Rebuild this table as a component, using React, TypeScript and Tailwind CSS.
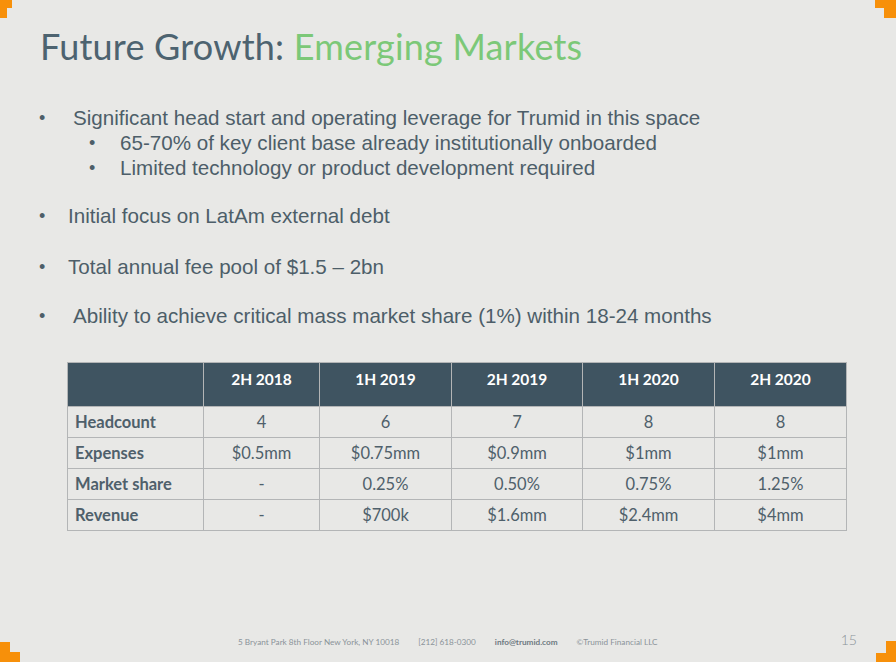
const rows = [
  { label: "Headcount", values: ["4", "6", "7", "8", "8"] },
  { label: "Expenses", values: ["$0.5mm", "$0.75mm", "$0.9mm", "$1mm", "$1mm"] },
  { label: "Market share", values: ["-", "0.25%", "0.50%", "0.75%", "1.25%"] },
  { label: "Revenue", values: ["-", "$700k", "$1.6mm", "$2.4mm", "$4mm"] },
];

const periods = ["2H 2018", "1H 2019", "2H 2019", "1H 2020", "2H 2020"];

function Bullet({ children, indent = false, gap = "pl-[32px]" }: { children: React.ReactNode; indent?: boolean; gap?: string }) {
  return (
    <div className={`flex h-[25px] items-center ${indent ? "pl-[50px]" : ""}`}>
      <span className="w-[6px] shrink-0 text-[18px] leading-none">•</span>
      <span className={`leading-[25px] ${indent ? "pl-[25px]" : gap}`}>{children}</span>
    </div>
  );
}

export default function App() {
  return (
    <div className="relative w-[896px] h-[662px] overflow-hidden bg-[#e8e8e6]">
      {/* corner marks */}
      <div className="absolute left-0 top-0 w-[12px] h-[8px] bg-[#f7900a]" />
      <div className="absolute left-0 top-0 w-[7px] h-[18px] bg-[#f7900a]" />
      <div className="absolute right-0 top-0 w-[21px] h-[8px] bg-[#f7900a]" />
      <div className="absolute right-0 top-0 w-[12px] h-[18px] bg-[#f7900a]" />
      <div className="absolute left-0 bottom-0 w-[10px] h-[20px] bg-[#f7900a]" />
      <div className="absolute left-0 bottom-0 w-[20px] h-[10px] bg-[#f7900a]" />
      <div className="absolute right-0 bottom-0 w-[10px] h-[21px] bg-[#f7900a]" />
      <div className="absolute right-0 bottom-0 w-[20px] h-[9px] bg-[#f7900a]" />

      <div className="flex flex-col h-full">
        <h1 className="pl-[40px] pt-[22px] text-[36px] leading-[48px] text-[#4d6370] font-['Lato',sans-serif] tracking-[0.2px]">
          Future Growth: <span className="text-[#7cc878]">Emerging Markets</span>
        </h1>

        <div className="mt-[35px] pl-[39px] text-[20.6px] text-[#4d5e69] font-['Liberation_Sans',Arial,sans-serif]">
          <Bullet gap="pl-[28px]">Significant head start and operating leverage for Trumid in this space</Bullet>
          <Bullet indent>65-70% of key client base already institutionally onboarded</Bullet>
          <Bullet indent>Limited technology or product development required</Bullet>
          <div className="h-[23px]" />
          <Bullet gap="pl-[23px]">Initial focus on LatAm external debt</Bullet>
          <div className="h-[26px]" />
          <Bullet gap="pl-[23px]">Total annual fee pool of $1.5 – 2bn</Bullet>
          <div className="h-[24px]" />
          <Bullet gap="pl-[28px]">Ability to achieve critical mass market share (1%) within 18-24 months</Bullet>
        </div>

        <table className="mt-[34px] ml-[67px] w-[779px] border-collapse table-fixed text-[16.5px] font-['Lato',sans-serif]">
          <colgroup>
            <col className="w-[136px]" />
            <col className="w-[116px]" />
            <col className="w-[132px]" />
            <col className="w-[131px]" />
            <col className="w-[132px]" />
            <col className="w-[132px]" />
          </colgroup>
          <thead>
            <tr className="h-[44px] bg-[#3f5461] text-white text-[15.5px]">
              <th className="border border-[#b3b5b6]" />
              {periods.map((p) => (
                <th key={p} className="border border-[#b3b5b6] text-center font-bold pb-[10px]">
                  {p}
                </th>
              ))}
            </tr>
          </thead>
          <tbody className="text-[#4f606b]">
            {rows.map((r) => (
              <tr key={r.label} className="h-[31px]">
                <td className="border border-[#b3b5b6] pl-[7px] font-bold text-[16.5px]">{r.label}</td>
                {r.values.map((v, i) => (
                  <td key={i} className="border border-[#b3b5b6] text-center">
                    {v}
                  </td>
                ))}
              </tr>
            ))}
          </tbody>
        </table>

        <div className="mt-auto mb-[6px] flex items-center text-[8.2px] text-[#8a9399] font-['Lato',sans-serif]">
          <div className="ml-[238px] flex gap-[19px]">
            <span>5 Bryant Park 8th Floor New York, NY 10018</span>
            <span>[212] 618-0300</span>
            <span className="font-bold text-[#6d7880]">info@trumid.com</span>
            <span>©Trumid Financial LLC</span>
          </div>
          <span className="ml-auto mr-[39px] text-[14px] font-light text-[#8a9399] mb-[6px]">15</span>
        </div>
      </div>
    </div>
  );
}
